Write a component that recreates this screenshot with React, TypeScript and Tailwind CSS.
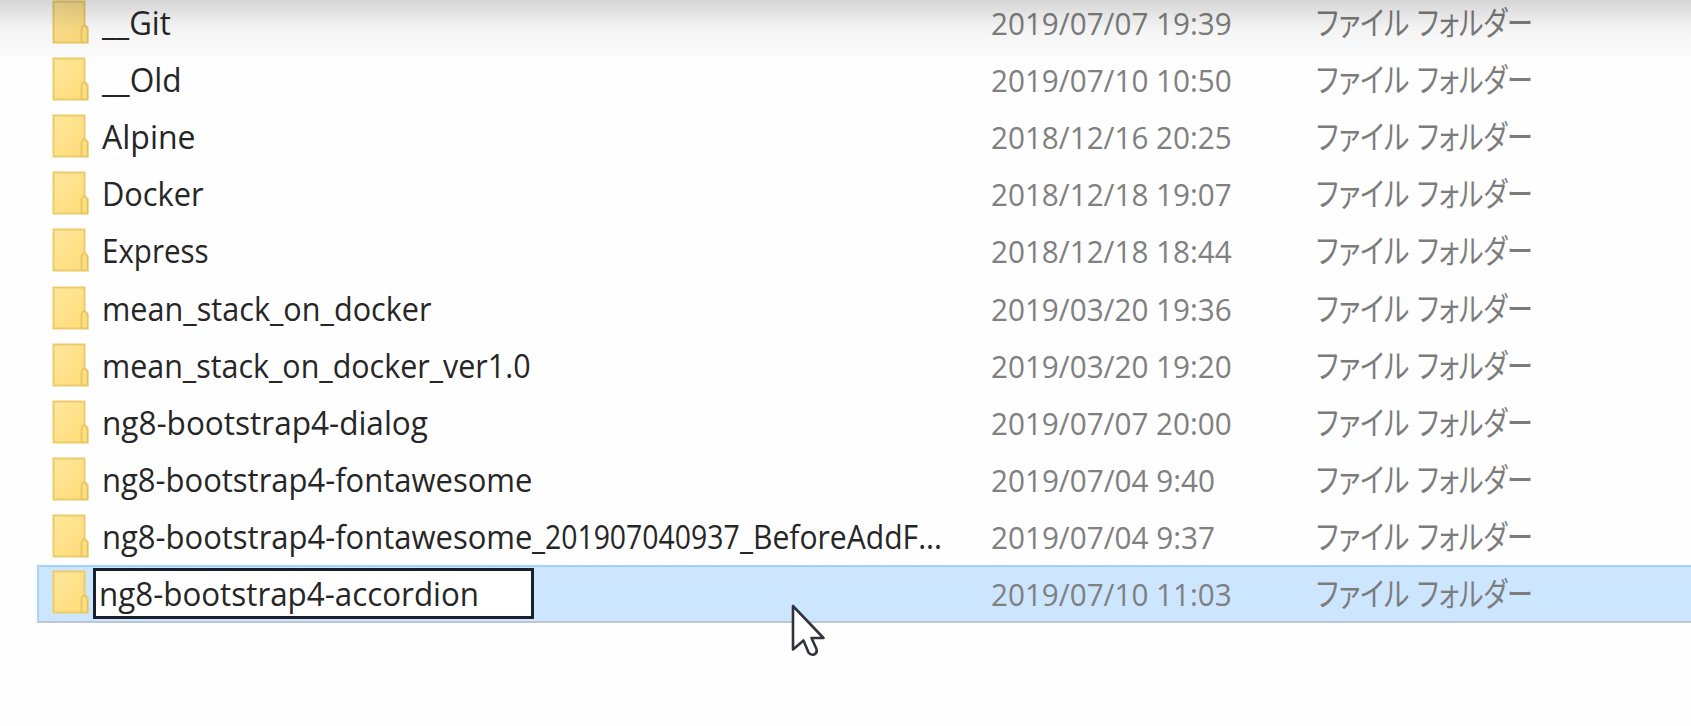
import { useLayoutEffect, useRef, useState } from "react";

type Part = [text: string, width: number];
type Entry = { name: Part[]; date: string; dateWidth: number; editing?: boolean };

const entries: Entry[] = [
  { name: [["__Git", 69]], date: "2019/07/07 19:39", dateWidth: 241 },
  { name: [["__Old", 80]], date: "2019/07/10 10:50", dateWidth: 241 },
  { name: [["Alpine", 94]], date: "2018/12/16 20:25", dateWidth: 241 },
  { name: [["Docker", 102]], date: "2018/12/18 19:07", dateWidth: 241 },
  { name: [["Express", 107]], date: "2018/12/18 18:44", dateWidth: 241 },
  { name: [["mean_stack_on_docker", 330]], date: "2019/03/20 19:36", dateWidth: 241 },
  { name: [["mean_stack_on_docker_ver1.0", 429]], date: "2019/03/20 19:20", dateWidth: 241 },
  { name: [["ng8-bootstrap4-dialog", 326]], date: "2019/07/07 20:00", dateWidth: 241 },
  { name: [["ng8-bootstrap4-fontawesome", 430]], date: "2019/07/04 9:40", dateWidth: 224 },
  {
    name: [
      ["ng8-bootstrap4-fontawesome", 430],
      ["_", 13],
      ["201907040937", 195],
      ["_", 13],
      ["BeforeAddF...", 189],
    ],
    date: "2019/07/04 9:37",
    dateWidth: 224,
  },
  { name: [["ng8-bootstrap4-accordion", 380]], date: "2019/07/10 11:03", dateWidth: 241, editing: true },
];

/** Condenses a single line of text to the given advance width. */
function Condensed({ text, width, className = "" }: { text: string; width: number; className?: string }) {
  const ref = useRef<HTMLSpanElement>(null);
  const [scale, setScale] = useState(1);
  useLayoutEffect(() => {
    if (ref.current) setScale(width / ref.current.offsetWidth);
  }, [text, width]);
  return (
    <span className="block shrink-0" style={{ width }}>
      <span
        ref={ref}
        className={`inline-block origin-left whitespace-pre ${className}`}
        style={{ transform: `scaleX(${scale})` }}
      >
        {text}
      </span>
    </span>
  );
}

function FileName({ parts }: { parts: Part[] }) {
  return (
    <div className="flex shrink-0 pt-px text-[#262626]">
      {parts.map(([text, width], i) => (
        <Condensed key={i} text={text} width={width} />
      ))}
    </div>
  );
}

function FolderIcon() {
  return (
    <svg viewBox="0 0 38 45" className="block h-[45px] w-[38px]" aria-hidden="true">
      <defs>
        <linearGradient id="folder" x1="0" y1="0" x2="1" y2="1">
          <stop offset="0" stopColor="#ffe79c" />
          <stop offset="1" stopColor="#ffdb76" />
        </linearGradient>
      </defs>
      <path d="M1.5 1.5H32.5V25L35.5 28V42.5H1.5Z" fill="url(#folder)" stroke="#eccb6a" strokeWidth="2" />
      <path d="M29.5 42V28.5L31 25.5H33L35.5 28.5V42.5Z" fill="#ffdf80" stroke="#e8c362" strokeWidth="1.6" />
    </svg>
  );
}

function Row({ entry }: { entry: Entry }) {
  return (
    <div
      className={`ml-[37px] flex shrink-0 items-center ${
        entry.editing
          ? "h-[58px] border-y-2 border-l-2 border-t-[#9fd2fd] border-b-[#bcc6d2] border-l-[#a9d6fc] bg-[#cce6ff]"
          : "h-[57.1px] border-y-2 border-l-2 border-transparent"
      }`}
    >
      <div className={`ml-[13px] w-[38px] shrink-0 ${entry.editing ? "mb-[3px]" : ""}`}>
        <FolderIcon />
      </div>
      {entry.editing ? (
        <div className="ml-[3px] flex h-[51px] w-[441px] shrink-0 items-center overflow-hidden border-[3px] border-[#17202e] bg-white pl-[3px]">
          <FileName parts={entry.name} />
        </div>
      ) : (
        <div className="ml-3 flex w-[434px] shrink-0 items-center">
          <FileName parts={entry.name} />
        </div>
      )}
      <div className="ml-auto flex w-[700px] shrink-0 items-center pt-px">
        <div className="w-[325px] shrink-0 text-[31px]">
          <Condensed text={entry.date} width={entry.dateWidth} className="text-[#808080]" />
        </div>
        <div className="flex shrink-0 items-center text-[33px] text-[#7c7c7c]">
          <div className="w-[101px] shrink-0">
            <Condensed text="ファイル" width={93} className="[font-feature-settings:'palt']" />
          </div>
          <Condensed text="フォルダー" width={116} className="[font-feature-settings:'palt']" />
        </div>
      </div>
    </div>
  );
}

export default function App() {
  return (
    <main className="relative h-[726px] w-[1691px] overflow-hidden bg-[#fefefe] font-['Open_Sans','Noto_Sans_CJK_JP',sans-serif] text-[32px] leading-[44px]">
      <div className="-mt-[6px] flex flex-col">
        {entries.map((entry) => (
          <Row key={entry.date} entry={entry} />
        ))}
      </div>
      <div className="pointer-events-none absolute inset-x-0 top-0 h-[64px] bg-linear-to-b from-black/16 via-black/4 via-45% to-transparent" />
      <svg viewBox="0 0 36 56" className="absolute top-[603px] left-[790px] h-[56px] w-[36px]" aria-hidden="true">
        <path
          d="M3 3V46.5L13.5 37.5L18.5 49.5Q21 53 25 51Q27.5 49.5 26.5 46L21.5 35H33.5Z"
          fill="#ffffff"
          stroke="#33333d"
          strokeWidth="2.6"
          strokeLinejoin="round"
        />
      </svg>
    </main>
  );
}
